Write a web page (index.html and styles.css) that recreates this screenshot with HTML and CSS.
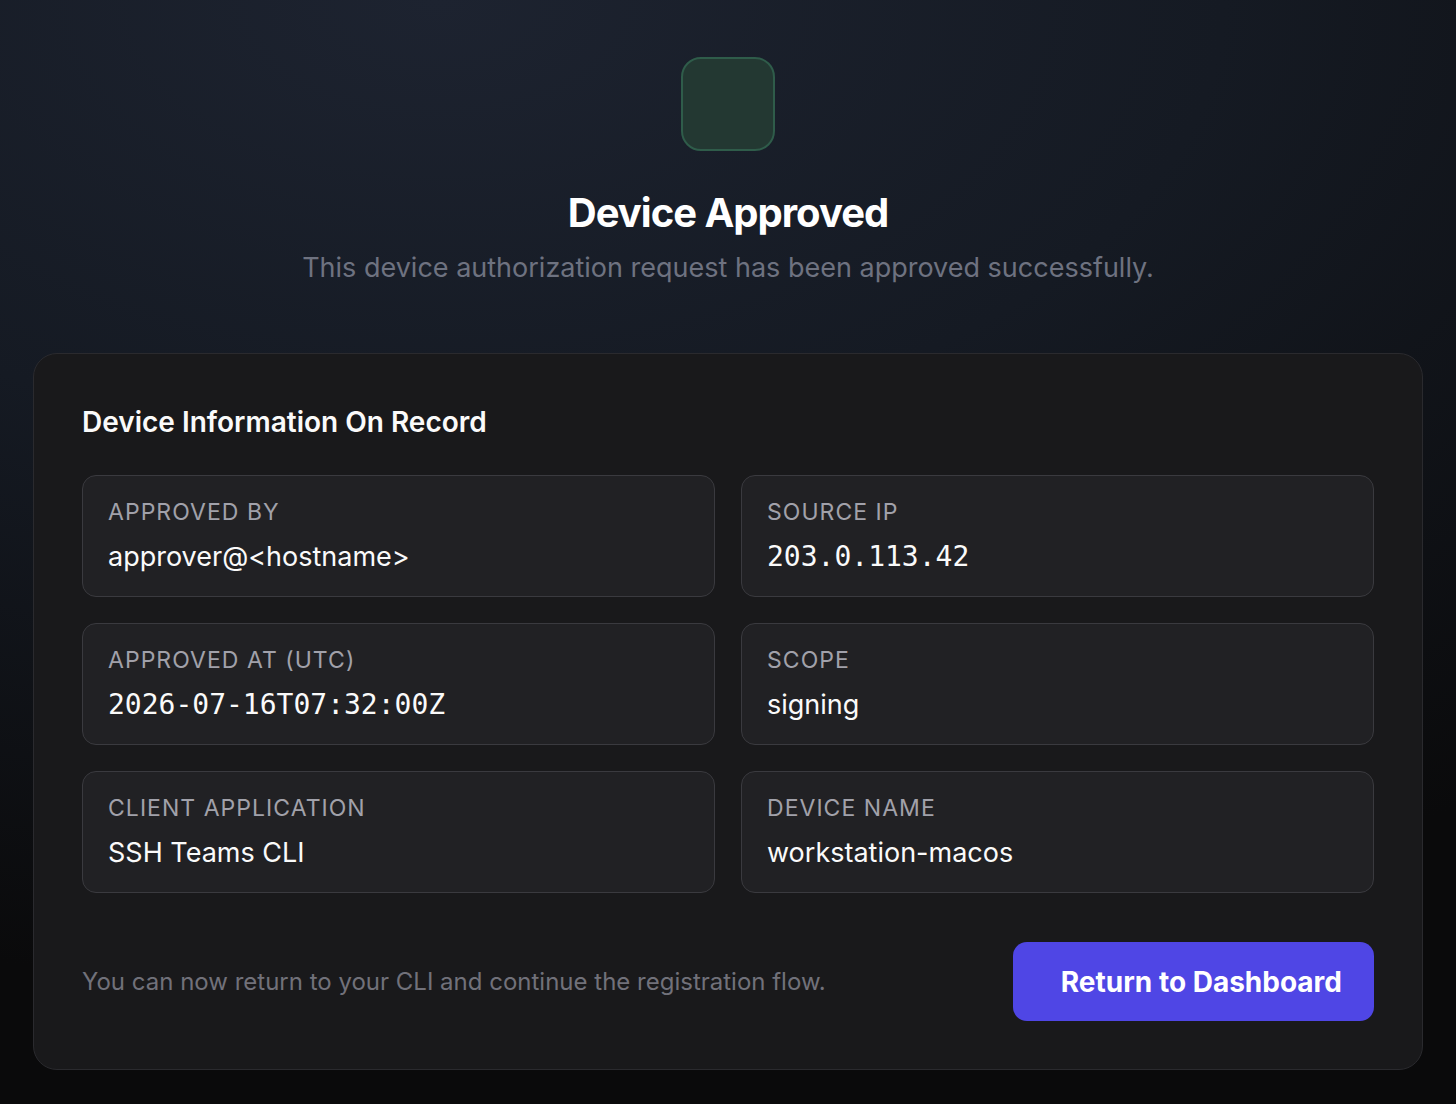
FILE: index.html
```html
<!DOCTYPE html>
<html lang="en">
<head>
    <meta charset="UTF-8">
    <meta name="viewport" content="width=device-width, initial-scale=1.0">
    <title>Device Approved</title>
    <link rel="stylesheet" href="styles.css">
</head>
<body>
    <div class="page">
        <header class="hero">
            <div class="status-icon"></div>
            <h1>Device Approved</h1>
            <p class="subtitle">This device authorization request has been approved successfully.</p>
        </header>

        <section class="card">
            <h2>Device Information On Record</h2>
            <div class="info-grid">
                <div class="info-item">
                    <span class="info-label">Approved By</span>
                    <span class="info-value">approver@&lt;hostname&gt;</span>
                </div>
                <div class="info-item">
                    <span class="info-label">Source IP</span>
                    <span class="info-value mono">203.0.113.42</span>
                </div>
                <div class="info-item">
                    <span class="info-label">Approved At (UTC)</span>
                    <span class="info-value mono">2026-07-16T07:32:00Z</span>
                </div>
                <div class="info-item">
                    <span class="info-label">Scope</span>
                    <span class="info-value">signing</span>
                </div>
                <div class="info-item">
                    <span class="info-label">Client Application</span>
                    <span class="info-value">SSH Teams CLI</span>
                </div>
                <div class="info-item">
                    <span class="info-label">Device Name</span>
                    <span class="info-value">workstation-macos</span>
                </div>
            </div>
            <div class="card-footer">
                <p class="hint">You can now return to your CLI and continue the registration flow.</p>
                <button type="button" class="btn-primary">Return to Dashboard</button>
            </div>
        </section>
    </div>
</body>
</html>
```

FILE: styles.css
```css
html, body {
    height: 100%;
}
body {
    margin: 0;
    font-family: Inter, "Noto Sans", sans-serif;
    color: #fafafa;
    background-color: #0a0a0b;
    background-image: radial-gradient(ellipse 120% 90% at 30% 0%, #1d2330 0%, #151a23 45%, #0a0a0b 100%);
}
.page {
    width: 1390px;
    margin: 0 auto;
    padding-top: 57px;
}
.hero {
    display: flex;
    flex-direction: column;
    align-items: center;
}
.status-icon {
    width: 94px;
    height: 94px;
    box-sizing: border-box;
    border: 2px solid #2f5c4a;
    border-radius: 20px;
    background-color: #233832;
}
h1 {
    margin: 38px 0 0;
    font-size: 40px;
    line-height: 48px;
    font-weight: 700;
    letter-spacing: -0.025em;
    color: #ffffff;
}
.subtitle {
    margin: 15px 0 0;
    font-size: 27px;
    line-height: 32px;
    color: #6e7280;
}
.card {
    margin-top: 69px;
    padding: 48px;
    border: 1px solid #2a2a2e;
    border-radius: 24px;
    background-color: #19191b;
}
h2 {
    margin: 0;
    font-size: 28px;
    line-height: 40px;
    font-weight: 600;
    color: #fafafa;
}
.info-grid {
    margin-top: 33px;
    display: grid;
    grid-template-columns: 1fr 1fr;
    gap: 26px;
}
.info-item {
    display: flex;
    flex-direction: column;
    gap: 14px;
    padding: 22px 25px;
    border: 1px solid #3a3a3f;
    border-radius: 14px;
    background-color: #212124;
}
.info-label {
    font-size: 23px;
    line-height: 28px;
    letter-spacing: 0.045em;
    text-transform: uppercase;
    color: #a1a1aa;
}
.info-value {
    font-size: 27px;
    line-height: 34px;
    color: #fafafa;
}
.info-value.mono {
    font-family: "DejaVu Sans Mono", "Liberation Mono", monospace;
    font-size: 28px;
    font-weight: 500;
}
.card-footer {
    margin-top: 49px;
    display: flex;
    justify-content: space-between;
    align-items: center;
}
.hint {
    margin: 0;
    font-size: 24px;
    color: #71717a;
}
.btn-primary {
    height: 79px;
    padding: 0 32px 0 48px;
    border: none;
    border-radius: 14px;
    background-color: #4f46e5;
    color: #ffffff;
    font-family: Inter, "Noto Sans", sans-serif;
    font-size: 28px;
    font-weight: 700;
    cursor: pointer;
}
```
